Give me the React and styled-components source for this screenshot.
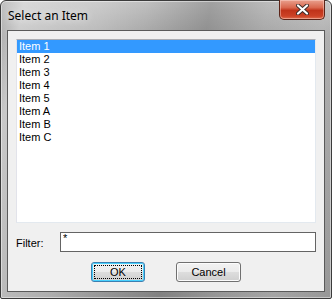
import React, { useState } from "react";
import styled, { createGlobalStyle } from "styled-components";

const GlobalStyle = createGlobalStyle`
  html, body { margin: 0; padding: 0; background: #fff; }
  body { font-family: "Liberation Sans", Arial, sans-serif; }
`;

const Window = styled.div`
  width: 332px;
  height: 299px;
  box-sizing: border-box;
  border: 1px solid #3b3b3b;
  border-radius: 6px 6px 2px 2px;
  padding: 0 6px 6px;
  display: flex;
  flex-direction: column;
  background:
    linear-gradient(100deg, rgba(255,255,255,0) 0%, rgba(255,255,255,0.4) 6%, rgba(255,255,255,0.2) 26%, rgba(0,0,0,0) 38%, rgba(0,0,0,0.16) 55%, rgba(0,0,0,0.02) 70%, rgba(255,255,255,0.1) 85%, rgba(0,0,0,0.02) 100%),
    linear-gradient(180deg, #c0c0c0 0%, #a8a8a8 12%, #9a9a9a 100%);
  box-shadow: inset 0 0 0 1px rgba(255,255,255,0.45);
`;

const TitleBar = styled.div`
  height: 29px;
  display: flex;
  align-items: flex-start;
  justify-content: space-between;
`;

const Title = styled.span`
  font-family: "Segoe UI", "Noto Sans", sans-serif;
  font-size: 12px;
  color: #000;
  padding: 6px 0 0 1px;
  text-shadow: 0 0 8px rgba(255,255,255,0.95);
`;

const CloseButton = styled.button`
  width: 46px;
  height: 20px;
  margin-top: -1px;
  padding: 0;
  border: 1px solid #5c2418;
  border-top: none;
  border-radius: 0 0 5px 5px;
  background: linear-gradient(180deg, #e9a08e 0%, #d9674e 40%, #c0331a 55%, #cc4226 85%, #de6f50 100%);
  box-shadow: inset 0 0 0 1px rgba(255,220,210,0.45);
  display: flex;
  align-items: center;
  justify-content: center;
`;

const Client = styled.div`
  flex: 1;
  border: 1px solid #5a5a5a;
  background: #f0f0f0;
  padding: 8px 7px 0 8px;
  display: flex;
  flex-direction: column;
`;

const ListBox = styled.ul`
  list-style: none;
  margin: 0;
  padding: 0;
  width: 300px;
  height: 184px;
  box-sizing: border-box;
  background: #fff;
  border: 1px solid;
  border-color: #abadb3 #e3e9ef #e3e9ef #e2e3ea;
`;

const Item = styled.li`
  height: 13px;
  line-height: 13px;
  padding-left: 2px;
  font-size: 11px;
  color: ${p => (p.$selected ? "#fff" : "#000")};
  background: ${p => (p.$selected ? "#3399ff" : "transparent")};
  cursor: default;
`;

const FilterRow = styled.div`
  margin-top: 9px;
  height: 20px;
  display: flex;
  align-items: center;
`;

const Label = styled.label`
  width: 44px;
  font-size: 11px;
  color: #000;
  padding-top: 2px;
`;

const TextBox = styled.input`
  width: 256px;
  height: 20px;
  box-sizing: border-box;
  border: 1px solid #646464;
  padding: 0 2px 8px;
  font-family: "Liberation Sans", Arial, sans-serif;
  font-size: 11px;
  line-height: 11px;
  outline: none;
  background: #fff;
`;

const ButtonRow = styled.div`
  margin-top: 10px;
  display: flex;
  justify-content: center;
  gap: 31px;
  padding-right: 1px;
`;

const Button = styled.button`
  width: ${p => p.$w}px;
  height: 20px;
  box-sizing: border-box;
  border: 1px solid ${p => (p.$default ? "#3c7fb1" : "#707070")};
  border-radius: 3px;
  padding: 0;
  font-family: "Liberation Sans", Arial, sans-serif;
  font-size: 11px;
  color: #000;
  background: linear-gradient(180deg, #f2f2f2 0%, #ebebeb 50%, #dddddd 51%, #cfcfcf 100%);
  box-shadow: inset 0 0 0 1px ${p => (p.$default ? "#48d1fe" : "#fcfcfc")};
  position: relative;
  &::after {
    content: "";
    display: ${p => (p.$default ? "block" : "none")};
    position: absolute;
    inset: 2px;
    border: 1px dotted #000;
  }
`;

const items = ["Item 1", "Item 2", "Item 3", "Item 4", "Item 5", "Item A", "Item B", "Item C"];

const App = () => {
  const [selected, setSelected] = useState(0);

  return (
    <>
      <GlobalStyle />
      <Window>
        <TitleBar>
          <Title>Select an Item</Title>
          <CloseButton aria-label="Close">
            <svg width="13" height="11" viewBox="0 0 13 11">
              <path
                d="M2 1.5 L11 9.5 M11 1.5 L2 9.5"
                stroke="#3a2a28"
                strokeWidth="4"
                strokeLinecap="round"
              />
              <path
                d="M2 1.5 L11 9.5 M11 1.5 L2 9.5"
                stroke="#fff"
                strokeWidth="2.2"
                strokeLinecap="round"
              />
            </svg>
          </CloseButton>
        </TitleBar>
        <Client>
          <ListBox>
            {items.map((it, i) => (
              <Item key={it} $selected={i === selected} onClick={() => setSelected(i)}>
                {it}
              </Item>
            ))}
          </ListBox>
          <FilterRow>
            <Label>Filter:</Label>
            <TextBox defaultValue="*" />
          </FilterRow>
          <ButtonRow>
            <Button $w={54} $default>OK</Button>
            <Button $w={65}>Cancel</Button>
          </ButtonRow>
        </Client>
      </Window>
    </>
  );
};

export default App;
